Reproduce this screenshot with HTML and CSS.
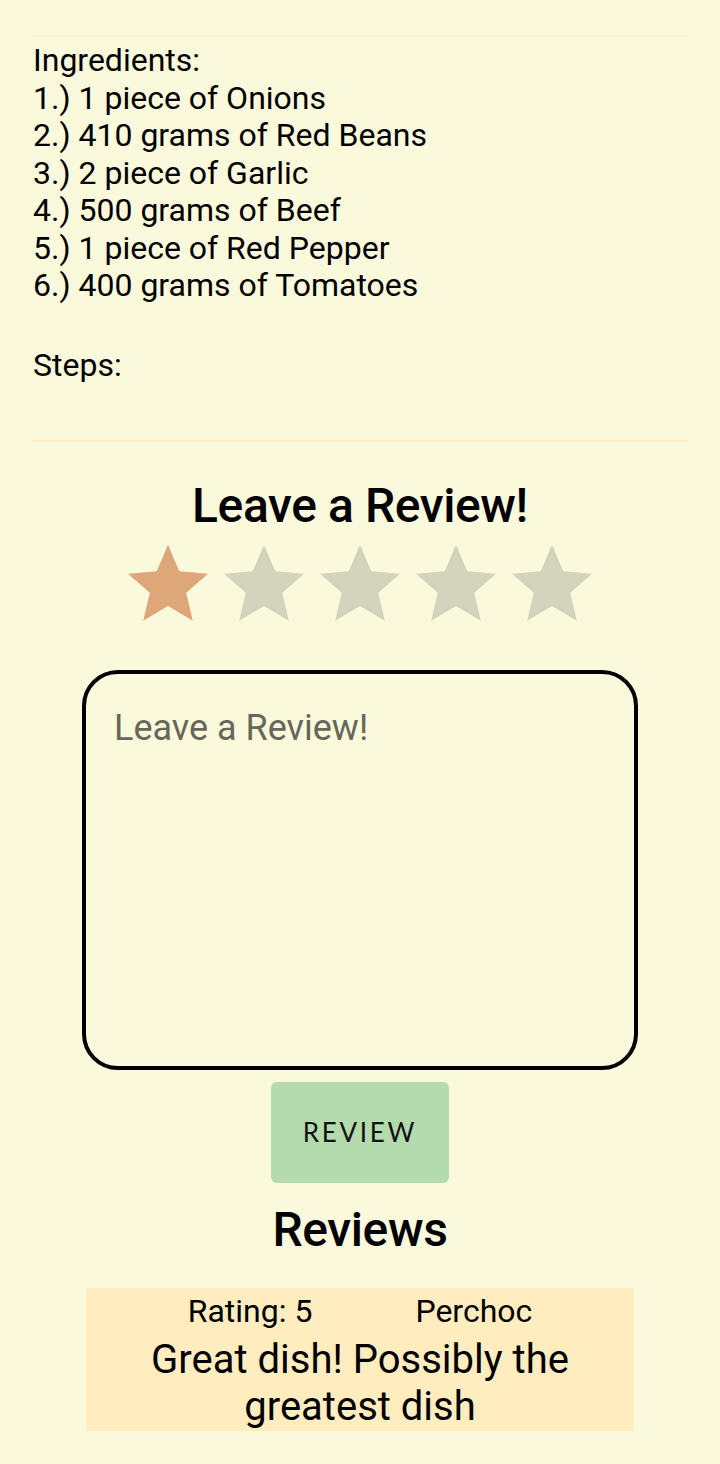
FILE: index.html
```html
<!DOCTYPE html>
<html>
<head>
<meta charset="utf-8">
<link rel="stylesheet" href="styles.css">
</head>
<body>
<div class="page">
  <hr class="divider">
  <div class="recipe">
    <div>Ingredients:</div>
    <div>1.) 1 piece of Onions</div>
    <div>2.) 410 grams of Red Beans</div>
    <div>3.) 2 piece of Garlic</div>
    <div>4.) 500 grams of Beef</div>
    <div>5.) 1 piece of Red Pepper</div>
    <div>6.) 400 grams of Tomatoes</div>
    <div class="blank">&nbsp;</div>
    <div>Steps:</div>
  </div>
  <hr class="divider lower">
  <h2 class="title">Leave a Review!</h2>
  <div class="stars">
    <svg class="star on" viewBox="0 0 24 24"><path d="M12 2l2.94 6.95 7.51.64-5.7 4.94 1.71 7.35L12 17.97l-6.46 3.91 1.71-7.35-5.7-4.94 7.51-.64z"/></svg>
    <svg class="star" viewBox="0 0 24 24"><path d="M12 2l2.94 6.95 7.51.64-5.7 4.94 1.71 7.35L12 17.970l-6.46 3.91 1.71-7.35-5.7-4.94 7.51-.64z"/></svg>
    <svg class="star" viewBox="0 0 24 24"><path d="M12 2l2.94 6.95 7.51.64-5.7 4.94 1.71 7.35L12 17.97l-6.46 3.91 1.71-7.35-5.7-4.94 7.51-.64z"/></svg>
    <svg class="star" viewBox="0 0 24 24"><path d="M12 2l2.94 6.95 7.51.64-5.7 4.94 1.71 7.35L12 17.97l-6.46 3.91 1.71-7.35-5.7-4.94 7.51-.64z"/></svg>
    <svg class="star" viewBox="0 0 24 24"><path d="M12 2l2.94 6.95 7.51.64-5.7 4.94 1.71 7.35L12 17.97l-6.46 3.91 1.71-7.35-5.7-4.94 7.51-.64z"/></svg>
  </div>
  <div class="input-box">
    <div class="placeholder">Leave a Review!</div>
  </div>
  <div class="btn-row"><div class="btn">REVIEW</div></div>
  <h2 class="title reviews">Reviews</h2>
  <div class="card">
    <div class="card-head">
      <span>Rating: 5</span>
      <span>Perchoc</span>
    </div>
    <div class="card-body">Great dish! Possibly the greatest dish</div>
  </div>
</div>
</body>
</html>
```
FILE: styles.css
```css
html, body {
  margin: 0;
  padding: 0;
  background: #fbf9dc;
}
body {
  font-family: Roboto, "Noto Sans", sans-serif;
  color: #000;
  width: 720px;
  height: 1464px;
  overflow: hidden;
}
.page {
  display: flex;
  flex-direction: column;
  padding: 35px 32px 0;
}
.divider {
  border: 0;
  height: 2px;
  background: #fbedc4;
  margin: 0;
  width: 100%;
}
.recipe {
  font-size: 32px;
  line-height: 37.5px;
  padding: 5px 1px 0;
}
.blank {
  height: 42.75px;
}
.divider.lower {
  margin-top: 55px;
}
.title {
  margin: 38px 0 0;
  text-align: center;
  font-size: 48px;
  font-weight: 500;
  line-height: 52px;
  letter-spacing: -0.4px;
}
.stars {
  display: flex;
  justify-content: center;
  gap: 4px;
  margin-top: 5px;
}
.star {
  width: 92px;
  height: 92px;
  fill: #d4d3bc;
}
.star.on {
  fill: #dea77a;
}
.input-box {
  margin: 41px 50px 0;
  height: 392px;
  border: 4px solid #000;
  border-radius: 36px;
}
.placeholder {
  padding: 33px 0 0 28px;
  font-size: 36px;
  line-height: 42px;
  color: #66675a;
}
.btn-row {
  display: flex;
  justify-content: center;
  margin-top: 12px;
}
.btn {
  width: 178px;
  height: 101px;
  background: #b4dbae;
  border-radius: 6px;
  display: flex;
  align-items: center;
  justify-content: center;
  font-family: Lato, Roboto, sans-serif;
  font-size: 26px;
  letter-spacing: 2.7px;
  color: #111;
}
.title.reviews {
  margin-top: 21px;
}
.card {
  margin: 32px 54px 0;
  background: #ffedbf;
  text-align: center;
  padding: 4px 0 1px;
}
.card-head {
  display: flex;
  justify-content: center;
  gap: 103px;
  font-size: 32px;
  line-height: 38px;
}
.card-body {
  margin-top: 6px;
  font-size: 40px;
  line-height: 47px;
  padding: 0 50px;
}
```
